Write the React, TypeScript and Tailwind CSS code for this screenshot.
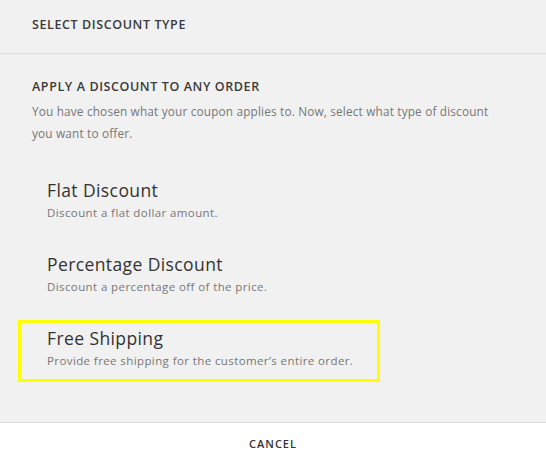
import React from "react";

const options = [
  { title: "Flat Discount", desc: "Discount a flat dollar amount.", active: false },
  { title: "Percentage Discount", desc: "Discount a percentage off of the price.", active: false },
  { title: "Free Shipping", desc: "Provide free shipping for the customer\u2019s entire order.", active: true },
];

export default function App() {
  return (
    <div className="w-[546px] h-[463px] bg-[#f1f1f1] flex flex-col font-['Open_Sans',sans-serif] overflow-hidden">
      <div className="h-[54px] shrink-0 border-b border-[#dedede] pl-[32px] pt-[16px]">
        <div className="text-[12.5px] leading-[18px] font-semibold tracking-[0.6px] text-[#3a3a3a]">
          SELECT DISCOUNT TYPE
        </div>
      </div>
      <div className="flex-1 flex flex-col">
        <div className="pl-[32px] pt-[24px] pr-[40px]">
          <div className="text-[12.5px] leading-[18px] font-semibold tracking-[0.6px] text-[#3a3a3a]">
            APPLY A DISCOUNT TO ANY ORDER
          </div>
          <p className="mt-[4px] text-[11.8px] leading-[22px] text-[#777] tracking-[0.17px]">
            You have chosen what your coupon applies to. Now, select what type of discount you want to offer.
          </p>
        </div>
        <div className="flex flex-col gap-[12px] pl-[18px] mt-[28px]">
          {options.map((o) => (
            <div
              key={o.title}
              className={`w-[362px] h-[62px] border-[3px] pl-[26px] pt-[3px] ${
                o.active ? "border-[#ffff00]" : "border-transparent"
              }`}
            >
              <div className="text-[17.5px] leading-[24px] text-[#333] tracking-[0.4px]">{o.title}</div>
              <div className="mt-[2px] text-[11.5px] leading-[18px] text-[#777] tracking-[0.4px]">{o.desc}</div>
            </div>
          ))}
        </div>
      </div>
      <div className="h-[41px] shrink-0 bg-white border-t border-[#dedede] flex items-center justify-center pt-[3px]">
        <span className="text-[11px] font-semibold tracking-[1px] text-[#333]">CANCEL</span>
      </div>
    </div>
  );
}
